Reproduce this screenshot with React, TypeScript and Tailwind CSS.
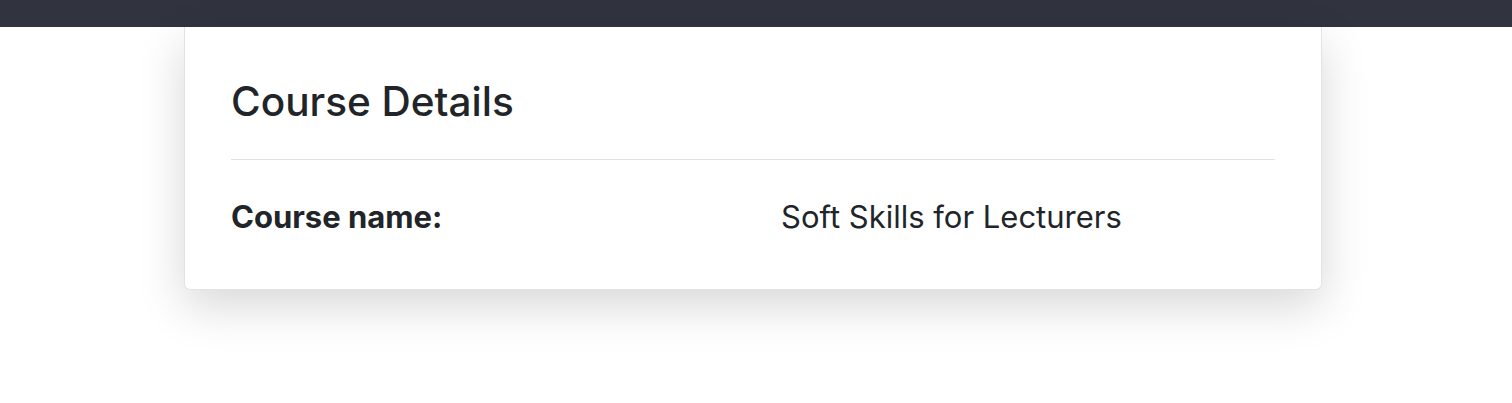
export default function App() {
  return (
    <div className="min-h-[403px] bg-white" style={{ fontFamily: "Inter, 'Noto Sans', sans-serif" }}>
      <div className="h-[27px] bg-[#31343f]" />
      <div className="ml-[184px] w-[1138px] rounded-b-md border border-t-0 border-[#e1e3e6] bg-white px-[46px] pt-[51px] pb-[49px] shadow-[0_16px_48px_rgba(0,0,0,0.16)]">
        <h1 className="text-[40.5px] leading-[1.2] font-medium text-[#212529]">Course Details</h1>
        <div className="mt-[32px] border-t border-[#dee2e6]" />
        <div className="mt-[34px] grid grid-cols-2 gap-x-[56px] text-[31px] leading-[1.5] text-[#212529]">
          <div className="font-bold">Course name:</div>
          <div>Soft Skills for Lecturers</div>
        </div>
      </div>
    </div>
  );
}
